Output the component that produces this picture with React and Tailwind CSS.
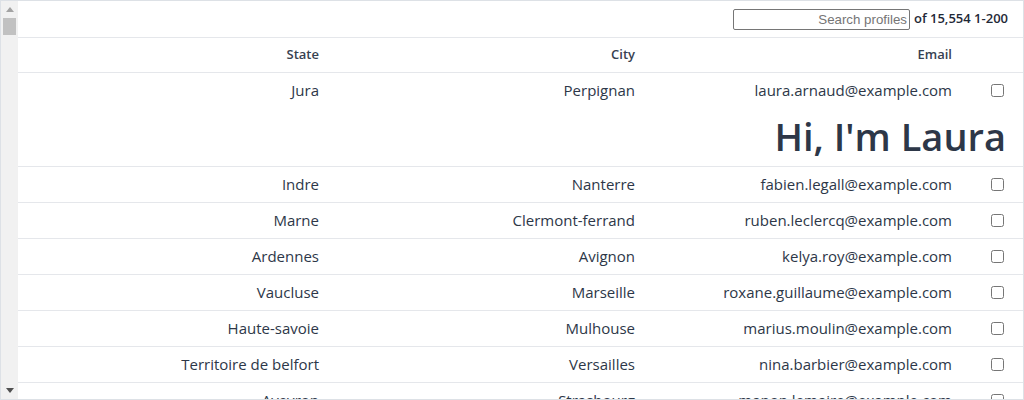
import React from "react";

const rows = [
  ["Indre", "Nanterre", "fabien.legall@example.com"],
  ["Marne", "Clermont-ferrand", "ruben.leclercq@example.com"],
  ["Ardennes", "Avignon", "kelya.roy@example.com"],
  ["Vaucluse", "Marseille", "roxane.guillaume@example.com"],
  ["Haute-savoie", "Mulhouse", "marius.moulin@example.com"],
  ["Territoire de belfort", "Versailles", "nina.barbier@example.com"],
  ["Aveyron", "Strasbourg", "manon.lemaire@example.com"],
];

function Row({ s, c, e, children }) {
  return (
    <div className="border-b border-[#e5e7eb]">
      <div className="grid grid-cols-[301px_316px_317px_1fr] h-[35px] items-center text-[15px] text-[#2d3748]">
        <div className="text-right">{s}</div>
        <div className="text-right">{c}</div>
        <div className="text-right">{e}</div>
        <div className="pl-[39px] flex items-center">
          <input type="checkbox" className="w-[13px] h-[13px] m-0" />
        </div>
      </div>
      {children}
    </div>
  );
}

export default function App() {
  return (
    <div
      className="w-[1024px] h-[400px] border border-[#dde1e6] flex overflow-hidden bg-white"
      style={{ fontFamily: '"Open Sans", "Noto Sans", sans-serif' }}
    >
      <div className="w-[17px] bg-[#f1f1f1] flex flex-col items-center shrink-0">
        <div className="h-[17px] flex items-center justify-center">
          <svg width="8" height="5" viewBox="0 0 8 5"><path d="M0 5 L4 0 L8 5Z" fill="#a3a3a3" /></svg>
        </div>
        <div className="w-[13px] h-[17px] bg-[#c1c1c1]" />
        <div className="flex-1" />
        <div className="h-[17px] flex items-center justify-center">
          <svg width="8" height="5" viewBox="0 0 8 5"><path d="M0 0 L8 0 L4 5Z" fill="#505050" /></svg>
        </div>
      </div>
      <div className="flex-1 flex flex-col min-w-0">
        <div className="h-[37px] shrink-0 border-b border-[#e5e7eb] flex items-center justify-end pr-[15px] gap-[4px]">
          <input
            placeholder="Search profiles"
            className="w-[177px] h-[21px] border border-[#767676] rounded-[2px] px-[2px] text-right text-[13.3px] placeholder:text-[#757575] outline-none"
            style={{ fontFamily: '"Liberation Sans", Arial, sans-serif' }}
          />
          <span className="text-[13px] font-semibold text-[#1f2937]">of 15,554 1-200</span>
        </div>
        <div className="grid grid-cols-[301px_316px_317px_1fr] h-[35px] shrink-0 items-center border-b border-[#e5e7eb] text-[13px] font-semibold text-[#374151]">
          <div className="text-right">State</div>
          <div className="text-right">City</div>
          <div className="text-right">Email</div>
          <div />
        </div>
        <Row s="Jura" c="Perpignan" e="laura.arnaud@example.com">
          <div className="h-[58px] flex items-start justify-end pr-[17px] pt-[4px]">
            <h1 className="text-[38px] leading-[48px] font-semibold text-[#2d3748]">Hi, I'm Laura</h1>
          </div>
        </Row>
        {rows.map(([s, c, e]) => (
          <Row key={e} s={s} c={c} e={e} />
        ))}
      </div>
    </div>
  );
}
